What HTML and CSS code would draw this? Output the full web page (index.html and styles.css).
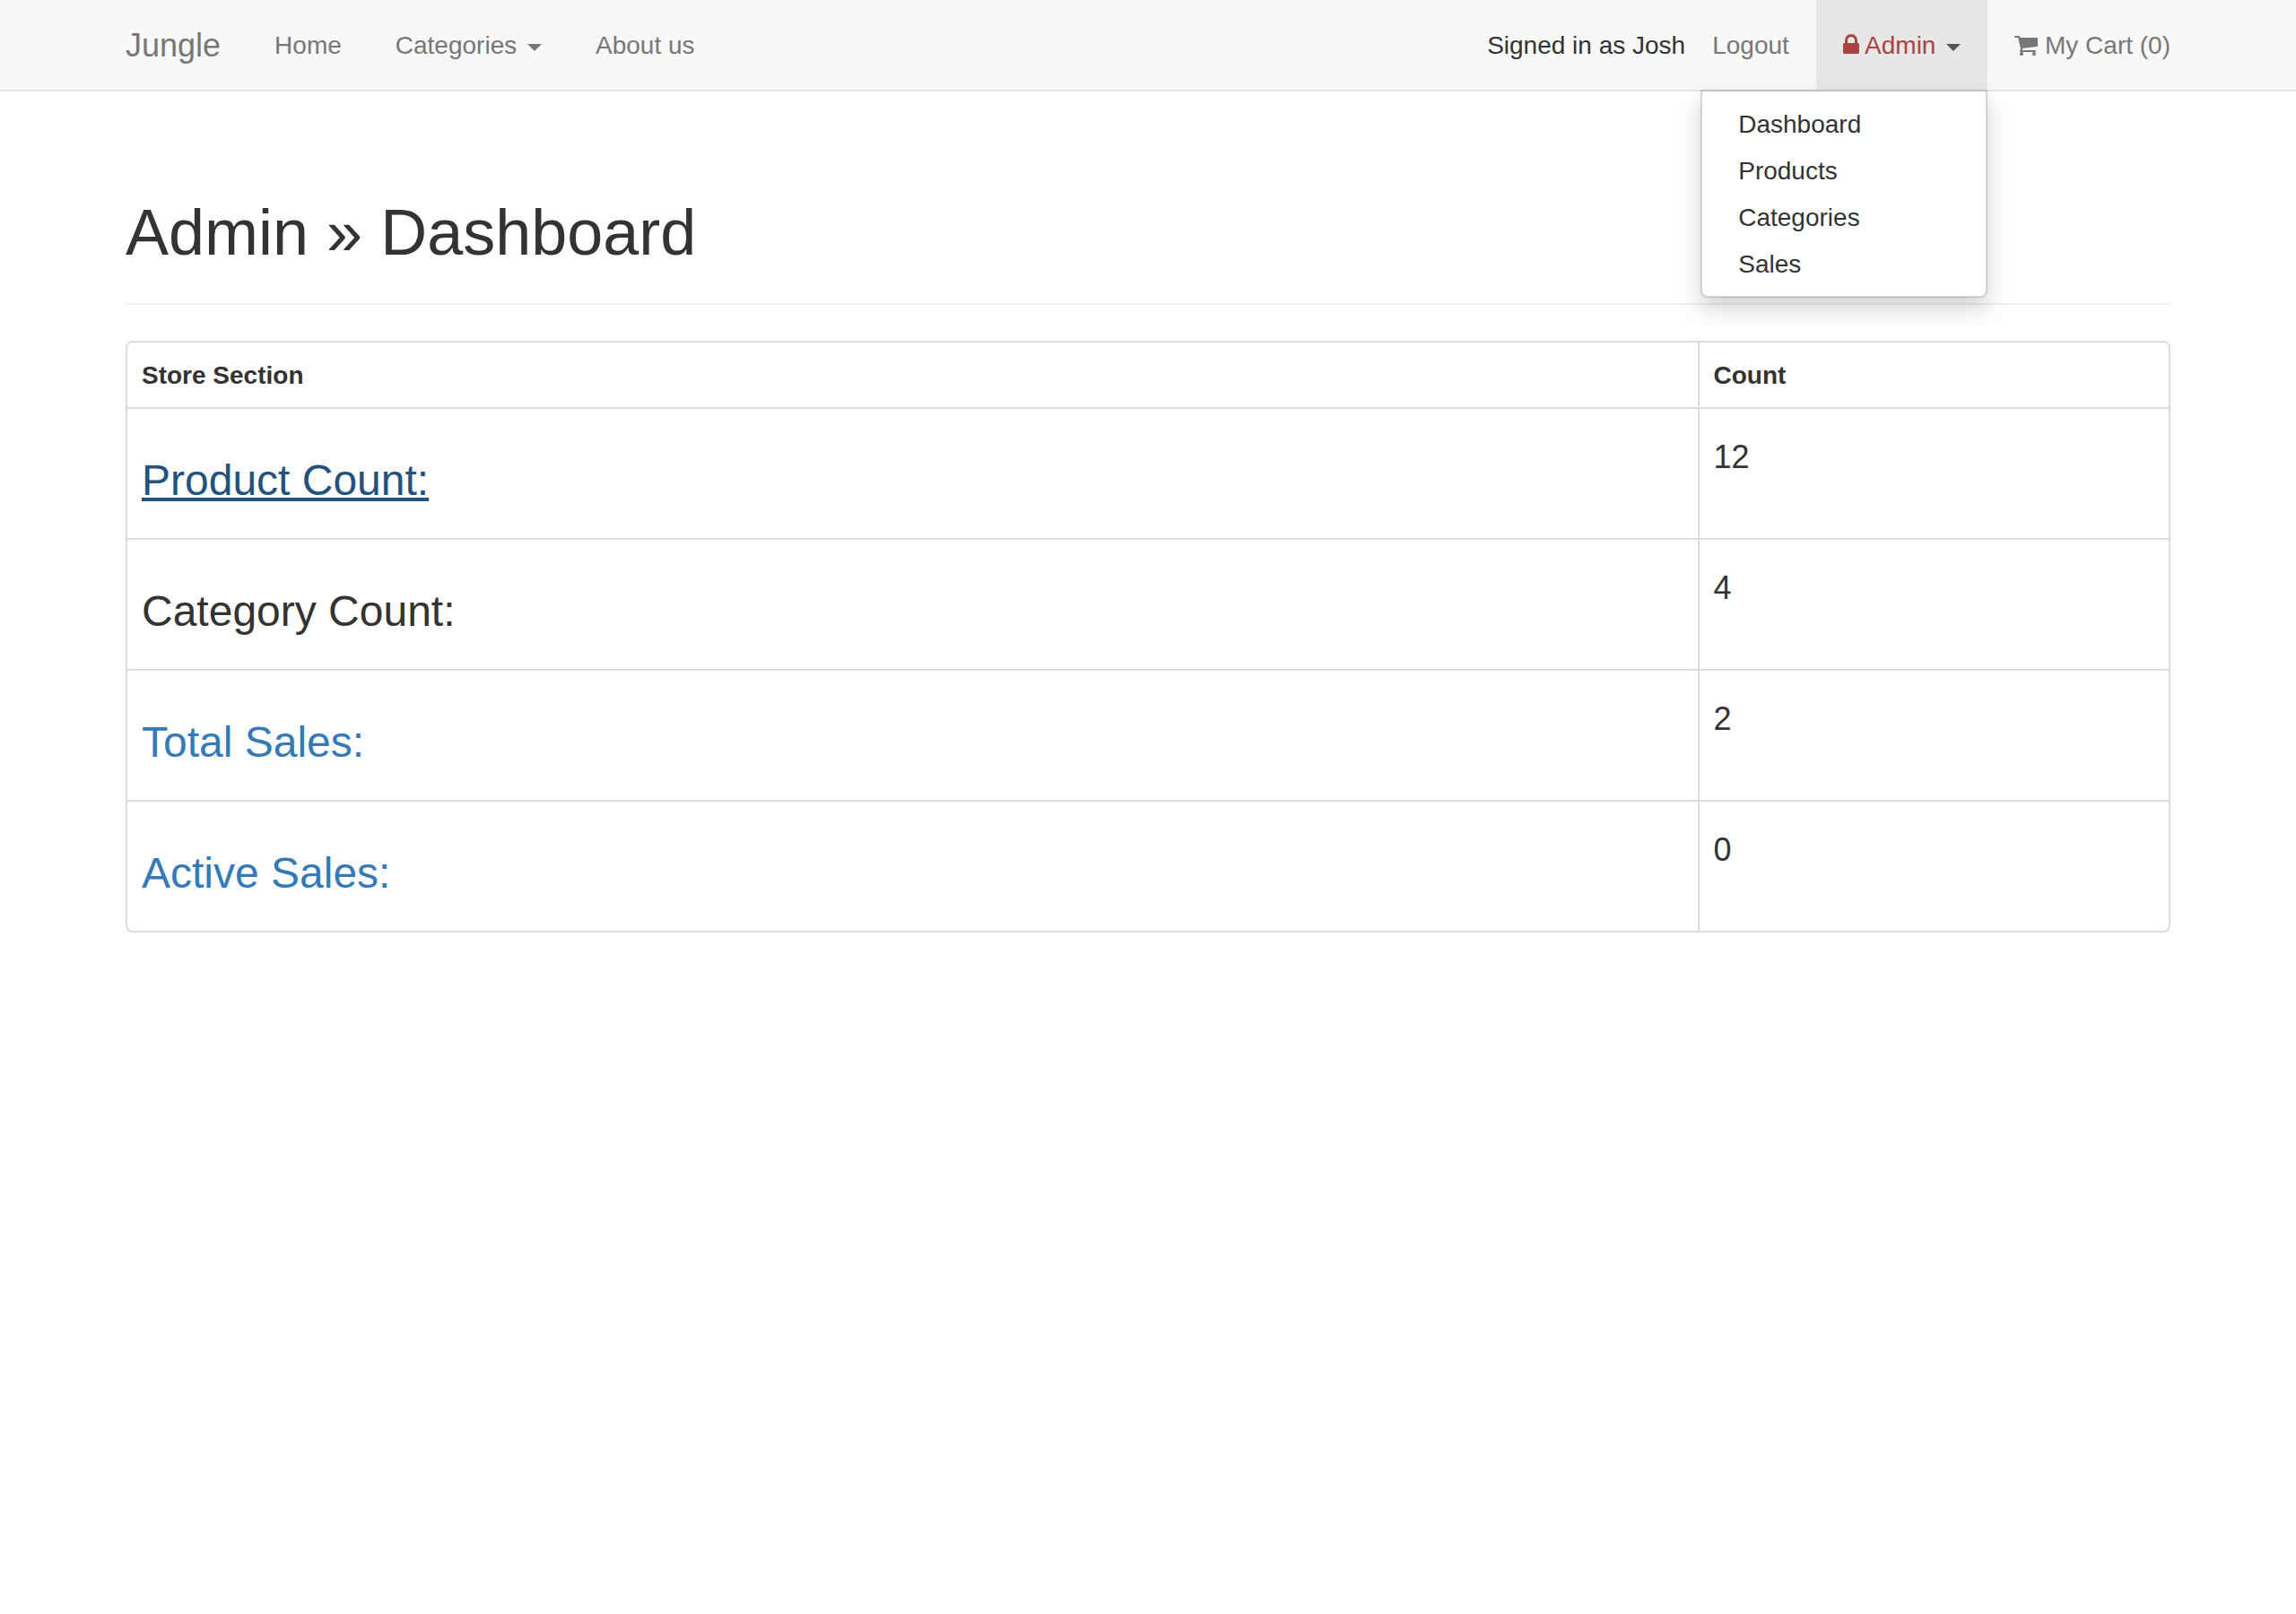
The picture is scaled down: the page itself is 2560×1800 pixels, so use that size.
FILE: index.html
```html
<!DOCTYPE html>
<html lang="en">
<head>
  <meta charset="utf-8">
  <meta name="viewport" content="width=device-width, initial-scale=1">
  <title>Jungle</title>
  <link rel="stylesheet" href="styles.css">
</head>
<body>
  <nav class="navbar">
    <div class="container navbar-inner">
      <a class="nav-link brand" href="#">Jungle</a>
      <ul class="nav">
        <li><a class="nav-link" href="#">Home</a></li>
        <li><button class="nav-link" type="button" aria-haspopup="true">Categories <span class="caret"></span></button></li>
        <li><a class="nav-link" href="#">About us</a></li>
      </ul>
      <ul class="nav nav-right">
        <li class="nav-text">Signed in as Josh</li>
        <li><a class="nav-link" href="#">Logout</a></li>
        <li class="dropdown">
          <button class="nav-link open" type="button" aria-haspopup="true" aria-expanded="true"><span class="text-danger"><svg class="icon icon-lock" viewBox="0 0 1152 1792" aria-hidden="true"><path d="M320 768h512v-192q0-106-75-181t-181-75-181 75-75 181v192zm832 96v576q0 40-28 68t-68 28h-960q-40 0-68-28t-28-68v-576q0-40 28-68t68-28h32v-192q0-184 132-316t316-132 316 132 132 316v192h32q40 0 68 28t28 68z"/></svg> Admin</span> <span class="caret"></span></button>
          <ul class="dropdown-menu">
            <li><a href="#">Dashboard</a></li>
            <li><a href="#">Products</a></li>
            <li><a href="#">Categories</a></li>
            <li><a href="#">Sales</a></li>
          </ul>
        </li>
        <li><a class="nav-link" href="#"><svg class="icon icon-cart" viewBox="0 0 1664 1792" aria-hidden="true"><path d="M640 1536q0 52-38 90t-90 38-90-38-38-90 38-90 90-38 90 38 38 90zm896 0q0 52-38 90t-90 38-90-38-38-90 38-90 90-38 90 38 38 90zm128-1088v512q0 24-16.5 42.5t-40.5 21.5l-1044 122q13 60 13 70 0 16-24 64h920q26 0 45 19t19 45-19 45-45 19h-1024q-26 0-45-19t-19-45q0-11 8-31.5t16-36 21.500-40 15.500-29.500l-177-823h-204q-26 0-45-19t-19-45 19-45 45-19h256q16 0 28.500 6.500t19.500 15.500 13 24.500 8 26 5.500 29.500 4.500 26h1201q26 0 45 19t19 45z"/></svg> My Cart (0)</a></li>
      </ul>
    </div>
  </nav>

  <main class="container">
    <header class="page-header">
      <h1>Admin » Dashboard</h1>
    </header>
    <div class="panel">
      <table class="table">
        <thead>
          <tr><th scope="col">Store Section</th><th scope="col">Count</th></tr>
        </thead>
        <tbody>
          <tr><td><h3><a class="active" href="#">Product Count:</a></h3></td><td><h4>12</h4></td></tr>
          <tr><td><h3>Category Count:</h3></td><td><h4>4</h4></td></tr>
          <tr><td><h3><a href="#">Total Sales:</a></h3></td><td><h4>2</h4></td></tr>
          <tr><td><h3><a href="#">Active Sales:</a></h3></td><td><h4>0</h4></td></tr>
        </tbody>
      </table>
    </div>
  </main>
</body>
</html>
```
FILE: styles.css
```css
* {
  box-sizing: border-box;
}

body {
  margin: 0;
  background: #fff;
  color: #333;
  font-family: "Liberation Sans", Arial, sans-serif;
  font-size: 28px;
  line-height: 40px;
}

a {
  color: #337ab7;
  text-decoration: none;
}

a.active,
a:hover {
  color: #23527c;
  text-decoration: underline;
}

.container {
  max-width: 2340px;
  margin: 0 auto;
  padding: 0 30px;
}

/* Navigation bar */
.navbar {
  background: #f8f8f8;
  border-bottom: 2px solid #e7e7e7;
}

.navbar-inner {
  display: flex;
}

.nav {
  display: flex;
  margin: 0;
  padding: 0;
  list-style: none;
}

.nav-right {
  margin-left: auto;
  margin-right: -30px;
}

.nav-link {
  display: block;
  margin: 0;
  padding: 31px 30px 29px;
  border: 0;
  background: none;
  color: #777;
  font: inherit;
  white-space: nowrap;
  cursor: pointer;
}

.nav-link:hover {
  color: #333;
  text-decoration: none;
}

.brand {
  margin-left: -30px;
  font-size: 36px;
}

.nav-text {
  padding: 31px 0 29px;
}

.open,
.open:hover {
  background: #e7e7e7;
  color: #555;
}

.text-danger {
  color: #a94442;
}

.caret {
  display: inline-block;
  margin-left: 4px;
  border-top: 8px solid;
  border-right: 8px solid transparent;
  border-left: 8px solid transparent;
  vertical-align: middle;
}

.icon {
  height: 28px;
  fill: currentColor;
  vertical-align: -4px;
}

.icon-lock {
  width: 18px;
}

.icon-cart {
  width: 26px;
}

/* Dropdown menu */
.dropdown {
  position: relative;
}

.dropdown-menu {
  position: absolute;
  top: 100%;
  right: 0;
  z-index: 10;
  min-width: 320px;
  margin: 0;
  padding: 10px 0;
  border: 2px solid rgba(0, 0, 0, 0.15);
  border-radius: 0 0 8px 8px;
  background: #fff;
  background-clip: padding-box;
  box-shadow: 0 12px 24px rgba(0, 0, 0, 0.175);
  list-style: none;
}

.dropdown-menu a {
  display: block;
  padding: 7px 40px 5px;
  color: #333;
}

/* Page content */
h1,
h3,
h4 {
  font-weight: 400;
}

.page-header {
  margin: 0 0 40px;
  padding: 117px 0 39px;
  border-bottom: 2px solid #eee;
}

h1 {
  margin: 0;
  font-size: 72px;
  line-height: 80px;
}

.panel {
  border: 2px solid #ddd;
  border-radius: 8px;
  box-shadow: 0 2px 2px rgba(0, 0, 0, 0.05);
}

.table {
  width: 100%;
  border-spacing: 0;
}

.table th,
.table td {
  padding: 16px;
  text-align: left;
  vertical-align: top;
}

.table th {
  padding: 17px 16px 15px;
}

.table td {
  border-top: 2px solid #ddd;
}

.table th:first-child,
.table td:first-child {
  width: 77%;
  border-right: 2px solid #ddd;
}

h3 {
  margin: 38px 0 22px;
  font-size: 48px;
  line-height: 52px;
}

h4 {
  margin: 18px 0;
  font-size: 36px;
  line-height: 40px;
}
```
